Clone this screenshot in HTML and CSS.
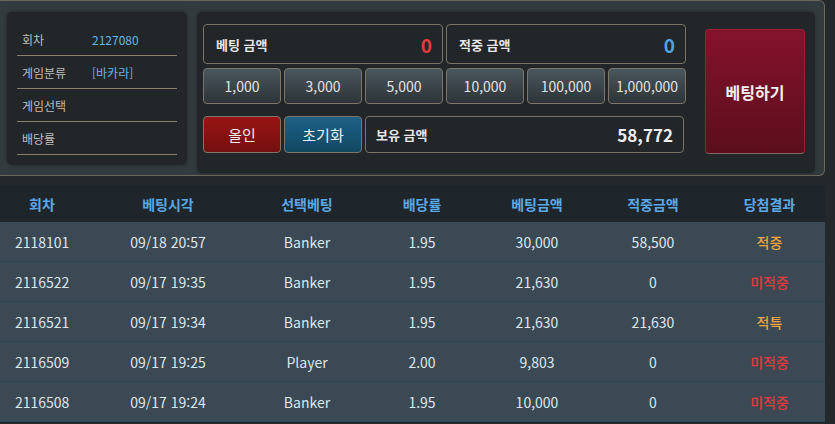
FILE: index.html
```html
<!DOCTYPE html>
<html lang="ko">
<head>
    <meta charset="UTF-8">
    <meta name="viewport" content="width=device-width, initial-scale=1.0">
    <title>바카라 베팅</title>
    <link rel="stylesheet" href="styles.css">
</head>
<body>
    <div class="top">
        <div class="info">
            <div class="info-row"><span class="label">회차</span><span class="value">2127080</span></div>
            <div class="info-row"><span class="label">게임분류</span><span class="value">[바카라]</span></div>
            <div class="info-row"><span class="label">게임선택</span><span class="value"></span></div>
            <div class="info-row"><span class="label">배당률</span><span class="value"></span></div>
        </div>

        <div class="bet-panel">
            <div class="bet-grid">
                <div class="amount-box wide">
                    <span class="amount-label">베팅 금액</span>
                    <span class="amount red">0</span>
                </div>
                <div class="amount-box wide">
                    <span class="amount-label">적중 금액</span>
                    <span class="amount blue">0</span>
                </div>

                <button class="chip">1,000</button>
                <button class="chip">3,000</button>
                <button class="chip">5,000</button>
                <button class="chip">10,000</button>
                <button class="chip">100,000</button>
                <button class="chip">1,000,000</button>

                <button class="btn allin">올인</button>
                <button class="btn reset">초기화</button>
                <div class="amount-box balance">
                    <span class="amount-label">보유 금액</span>
                    <span class="amount big">58,772</span>
                </div>
            </div>
            <button class="bet-btn">베팅하기</button>
        </div>
    </div>

    <table class="history">
        <thead>
            <tr>
                <th class="c1">회차</th>
                <th class="c2">베팅시각</th>
                <th class="c3">선택베팅</th>
                <th class="c4">배당률</th>
                <th class="c5">베팅금액</th>
                <th class="c6">적중금액</th>
                <th class="c7">당첨결과</th>
            </tr>
        </thead>
        <tbody>
            <tr>
                <td>2118101</td><td>09/18 20:57</td><td>Banker</td><td>1.95</td><td>30,000</td><td>58,500</td><td class="win">적중</td>
            </tr>
            <tr>
                <td>2116522</td><td>09/17 19:35</td><td>Banker</td><td>1.95</td><td>21,630</td><td>0</td><td class="lose">미적중</td>
            </tr>
            <tr>
                <td>2116521</td><td>09/17 19:34</td><td>Banker</td><td>1.95</td><td>21,630</td><td>21,630</td><td class="win">적특</td>
            </tr>
            <tr>
                <td>2116509</td><td>09/17 19:25</td><td>Player</td><td>2.00</td><td>9,803</td><td>0</td><td class="lose">미적중</td>
            </tr>
            <tr>
                <td>2116508</td><td>09/17 19:24</td><td>Banker</td><td>1.95</td><td>10,000</td><td>0</td><td class="lose">미적중</td>
            </tr>
        </tbody>
    </table>
</body>
</html>
```

FILE: styles.css
```css
body {
    margin: 0;
    background-color: #23282a;
    font-family: "Noto Sans CJK KR", "Noto Sans", sans-serif;
    color: #d8e0e4;
}
button {
    font-family: inherit;
    cursor: pointer;
}

/* top area */
.top {
    display: flex;
    align-items: flex-start;
    gap: 10px;
    width: 817px;
    height: 163px;
    padding: 11px 0 0 7px;
    background-color: #343b3f;
    border: 1px solid #6e675b;
    border-left: none;
    border-radius: 0 6px 6px 0;
}
.info {
    width: 160px;
    height: 142px;
    padding: 11px 10px 0;
    background-color: #222628;
    border-radius: 5px;
    box-shadow: 0 0 4px rgba(0, 0, 0, 0.35);
}
.info-row {
    display: flex;
    align-items: center;
    height: 32px;
    padding-left: 5px;
    border-bottom: 1px solid #8a7f6d;
    font-size: 12px;
}
.label {
    width: 70px;
    color: #bdbdbd;
}
.value {
    color: #62b5e8;
}

.bet-panel {
    display: flex;
    align-items: flex-start;
    gap: 19px;
    width: 602px;
    height: 149px;
    padding: 12px 10px 0 6px;
    background-color: #222628;
    border-radius: 5px;
    box-shadow: 0 0 4px rgba(0, 0, 0, 0.35);
}
.bet-grid {
    display: grid;
    grid-template-columns: repeat(6, 78px);
    grid-template-rows: 40px 36px 45px;
    column-gap: 3px;
    row-gap: 4px;
}
.amount-box {
    display: flex;
    align-items: center;
    justify-content: space-between;
    padding: 0 10px 0 12px;
    border: 1px solid #7a7366;
    border-radius: 4px;
}
.amount-box.wide {
    grid-column: span 3;
}
.amount-box.balance {
    grid-column: span 4;
    margin-top: 8px;
    margin-right: 2px;
    padding-left: 10px;
}
.amount-label {
    font-size: 13px;
    font-weight: bold;
    color: #e6e6e6;
}
.amount {
    font-size: 19px;
    font-weight: bold;
    color: #eeeeee;
}
.amount.big {
    font-size: 17px;
}
.amount.red {
    color: #e03c3c;
}
.amount.blue {
    color: #4fa3e3;
}
.chip {
    font-size: 14px;
    color: #e2e2e2;
    background: linear-gradient(#4a565d, #2d3438);
    border: 1px solid #7d7568;
    border-radius: 4px;
}
.btn {
    margin-top: 8px;
    font-size: 15px;
    color: #eeeeee;
    border: 1px solid #7d7568;
    border-radius: 4px;
}
.allin {
    background: linear-gradient(#9a1414, #73100f);
}
.reset {
    background: linear-gradient(#1e6186, #114862);
}
.bet-btn {
    width: 100px;
    height: 125px;
    margin-top: 5px;
    font-size: 16px;
    font-weight: bold;
    color: #f0f0f0;
    background: linear-gradient(#84122d, #5c0e1d);
    border: 1px solid #9e2030;
    border-bottom-color: #7d6a62;
    border-radius: 4px;
}

/* history table */
.history {
    width: 825px;
    margin-top: 9px;
    border-collapse: collapse;
    table-layout: fixed;
}
.history th {
    height: 37px;
    padding: 0;
    background-color: #1e252b;
    color: #5aa9e6;
    font-size: 14px;
    font-weight: bold;
}
.history td {
    height: 39px;
    padding: 0;
    background-color: #3a4954;
    border-bottom: 1px solid #2d4657;
    text-align: center;
    font-size: 14px;
    color: #dde6ec;
}
.history td:first-child {
    text-align: left;
    padding-left: 15px;
}
.c1 { width: 84px; }
.c2 { width: 168px; }
.c3 { width: 110px; }
.c4 { width: 120px; }
.c5 { width: 110px; }
.c6 { width: 122px; }
.c7 { width: 111px; }
.history td.win,
.history td.lose {
    font-weight: 500;
}
.history td.win {
    color: #eaa63c;
}
.history td.lose {
    color: #e2393d;
}
```
